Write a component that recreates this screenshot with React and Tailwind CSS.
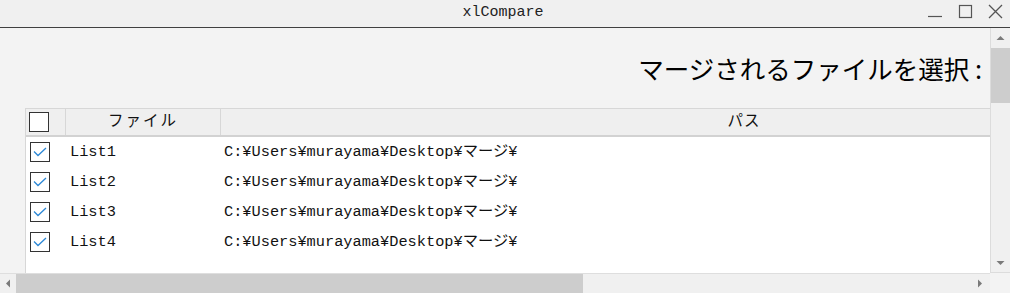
import React from "react";

const mono = { fontFamily: '"Liberation Mono", "Noto Sans CJK JP", monospace' };

const rows = [
  { name: "List1", path: "C:¥Users¥murayama¥Desktop¥マージ¥" },
  { name: "List2", path: "C:¥Users¥murayama¥Desktop¥マージ¥" },
  { name: "List3", path: "C:¥Users¥murayama¥Desktop¥マージ¥" },
  { name: "List4", path: "C:¥Users¥murayama¥Desktop¥マージ¥" },
];

const Check = ({ checked }) => (
  <div className="w-[20px] h-[20px] border border-[#333] bg-white flex items-center justify-center">
    {checked && (
      <svg width="14" height="10" viewBox="0 0 14 10">
        <path d="M1 4.5 L5 8.5 L13 1" fill="none" stroke="#2b87d6" strokeWidth="1.3" />
      </svg>
    )}
  </div>
);

const Arrow = ({ dir }) => {
  const pts = {
    up: "0,5 4,1 8,5",
    down: "0,1 4,5 8,1",
    left: "5,0 1,4 5,8",
    right: "1,0 5,4 1,8",
  }[dir];
  const vertical = dir === "up" || dir === "down";
  return (
    <svg width={vertical ? 9 : 6} height={vertical ? 6 : 9} viewBox={vertical ? "0 0 8 6" : "0 0 6 8"}>
      <polygon points={pts} fill="#7a7a7a" />
    </svg>
  );
};

export default function App() {
  return (
    <div className="w-[1010px] h-[293px] flex flex-col bg-[#f3f3f3] overflow-hidden">
      {/* Title bar */}
      <div className="h-[28px] shrink-0 bg-[#f0f0f0] border-b border-[#404040] grid grid-cols-[1fr_auto_1fr]">
        <div />
        <div className="text-[15px] leading-[26px] text-[#222] -ml-[4px]" style={mono}>
          xlCompare
        </div>
        <div className="flex justify-end items-start gap-[15px] pr-[7px] pt-[4px]">
          <svg width="15" height="15" viewBox="0 0 15 15">
            <line x1="0" y1="12.5" x2="14" y2="12.5" stroke="#555" strokeWidth="1.2" />
          </svg>
          <svg width="15" height="15" viewBox="0 0 15 15">
            <rect x="1.5" y="1.5" width="12" height="12" fill="none" stroke="#555" strokeWidth="1.2" />
          </svg>
          <svg width="15" height="15" viewBox="0 0 15 15">
            <path d="M1 1 L14 14 M14 1 L1 14" stroke="#555" strokeWidth="1.3" />
          </svg>
        </div>
      </div>

      {/* Body */}
      <div className="flex-1 flex min-h-0">
        <div className="flex-1 flex flex-col min-w-0">
          <div className="flex-1 flex flex-col min-h-0">
            <div
              className="h-[80px] shrink-0 flex items-center justify-end pr-[8px] text-[25.5px] text-black"
              style={{ fontFamily: '"Noto Sans CJK JP", "Noto Sans", sans-serif' }}
            >
              マージされるファイルを選択 :
            </div>
            <div className="flex-1 ml-[25px] border-l border-t border-[#d7d7d7] bg-white flex flex-col overflow-hidden">
              <div className="h-[28px] shrink-0 bg-[#efefef] border-b-2 border-[#d2d2d2] flex text-[15.5px] text-[#111]" style={mono}>
                <div className="w-[40px] shrink-0 flex items-center pl-[3px] border-r border-[#d7d7d7]">
                  <Check />
                </div>
                <div className="w-[155px] shrink-0 flex items-center justify-center tracking-[2px] border-r border-[#d7d7d7] pt-[2px]">
                  ファイル
                </div>
                <div className="w-[1046px] shrink-0 flex items-center justify-center tracking-[1px] pt-[2px]">パス</div>
              </div>
              {rows.map((r) => (
                <div key={r.name} className="h-[30px] flex items-center text-[15.3px] text-[#111]" style={mono}>
                  <div className="w-[40px] shrink-0 pl-[4px]">
                    <Check checked />
                  </div>
                  <div className="w-[155px] shrink-0 pl-[4px]">{r.name}</div>
                  <div className="flex-1 pl-[3px] pt-[1px]">{r.path}</div>
                </div>
              ))}
            </div>
          </div>
          {/* Horizontal scrollbar */}
          <div className="h-[20px] shrink-0 bg-[#f0f0f0] border-t border-[#dedede] flex items-center">
            <div className="w-[16px] flex justify-center">
              <Arrow dir="left" />
            </div>
            <div className="w-[567px] h-full bg-[#cdcdcd]" />
            <div className="flex-1" />
            <div className="w-[20px] flex justify-center">
              <Arrow dir="right" />
            </div>
          </div>
        </div>

        {/* Vertical scrollbar */}
        <div className="w-[20px] shrink-0 flex flex-col">
          <div className="flex-1 bg-[#f0f0f0] border-l border-b border-[#dcdcdc] flex flex-col">
            <div className="h-[20px] flex items-center justify-center">
              <Arrow dir="up" />
            </div>
            <div className="h-[55px] bg-[#cdcdcd]" />
            <div className="flex-1" />
            <div className="h-[19px] flex items-center justify-center">
              <Arrow dir="down" />
            </div>
          </div>
          <div className="h-[20px] shrink-0 bg-[#f3f3f3]" />
        </div>
      </div>
    </div>
  );
}
